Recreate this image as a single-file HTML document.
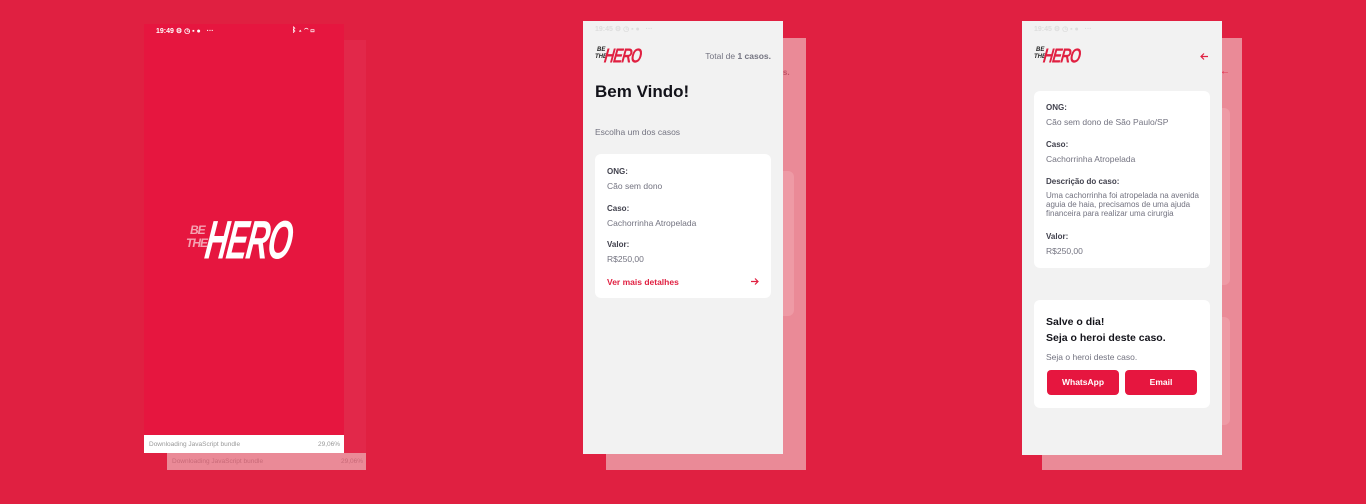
<!DOCTYPE html><html><head><meta charset="utf-8"><style>
*{margin:0;padding:0;box-sizing:border-box}
body{width:1366px;height:504px;background:#E02041;position:relative;overflow:hidden;font-family:"Liberation Sans",sans-serif}
.a{position:absolute}
.sh{background:#EA8A97}
.ph{background:#F2F2F2}
.card{background:#fff;border-radius:6px;position:absolute}
.lb{position:absolute;font-size:8px;font-weight:bold;color:#41414D}
.vl{position:absolute;font-size:8.5px;color:#737380}
.logo{position:absolute}
.logo .be{position:absolute;font-weight:bold;font-style:italic;line-height:1}
.logo .hero{position:absolute;font-weight:900;font-style:italic;line-height:1;transform:skewX(-8deg) scaleY(1.45);transform-origin:left top;letter-spacing:-1px}
.st{position:absolute;font-size:7px;font-weight:bold;color:#fff}
</style></head><body>
<!-- splash -->
<div class="a" style="left:167px;top:40px;width:199px;height:430px;background:#E2284A"></div>
<div class="a" style="left:167px;top:453px;width:199px;height:17px;background:#EA8A97"></div>
<div class="a" style="left:172px;top:458px;font-size:6.5px;color:#c86a78">Downloading JavaScript bundle</div>
<div class="a" style="left:341px;top:458px;font-size:6.5px;color:#c86a78">29,06%</div>
<div class="a" style="left:144px;top:24px;width:200px;height:411px;background:#E6163F"></div>
<div class="st" style="left:156px;top:27px">19:49 ⚙ ◷ ▪ ●&nbsp;&nbsp; ···</div>
<div class="st" style="left:292px;top:27px">ᛒ ▴ ◠ ▭</div>
<div class="a" style="left:144px;top:435px;width:200px;height:18px;background:#fff"></div>
<div class="a" style="left:149px;top:441px;font-size:6.5px;color:#999">Downloading JavaScript bundle</div>
<div class="a" style="left:318px;top:441px;font-size:6.5px;color:#999">29,06%</div>
<div class="logo" style="left:186px;top:214px">
<div class="be" style="left:4px;top:10px;font-size:12px;color:#F4A3B2;letter-spacing:-1px">BE</div>
<div class="be" style="left:0px;top:23px;font-size:12px;color:#F4A3B2;letter-spacing:-1px">THE</div>
<div class="hero" style="left:24px;top:-1px;font-size:31px;color:#fff;transform:skewX(-8deg) scaleY(1.75)">HERO</div>
</div>
<!-- middle -->
<div class="a sh" style="left:606px;top:38px;width:200px;height:432px"></div>
<div class="a" style="left:778px;top:68px;font-size:8px;color:#c05466;font-weight:bold">os.</div>
<div class="a" style="left:618px;top:171px;width:176px;height:145px;background:#EE9AA5;border-radius:6px"></div>
<div class="a ph" style="left:583px;top:21px;width:200px;height:433px"></div>
<div class="a" style="left:595px;top:25px;font-size:7px;color:#ddd;font-weight:bold">19:45 ⚙ ◷ ▪ ●&nbsp;&nbsp; ···</div>
<div class="logo" style="left:595px;top:45px">
<div class="be" style="left:2px;top:2px;font-size:6px;color:#222">BE</div>
<div class="be" style="left:0;top:9px;font-size:6px;color:#222">THE</div>
<div class="hero" style="left:11px;top:0;font-size:14px;color:#E02041">HERO</div>
</div>
<div class="a" style="right:595px;top:51px;font-size:8.5px;color:#737380">Total de <b>1 casos.</b></div>
<div class="a" style="left:595px;top:82px;font-size:17px;font-weight:bold;color:#13131A">Bem Vindo!</div>
<div class="a" style="left:595px;top:127px;font-size:8.5px;color:#737380">Escolha um dos casos</div>
<div class="card" style="left:595px;top:154px;width:176px;height:144px"></div>
<div class="lb" style="left:607px;top:167px">ONG:</div>
<div class="vl" style="left:607px;top:181px">Cão sem dono</div>
<div class="lb" style="left:607px;top:204px">Caso:</div>
<div class="vl" style="left:607px;top:218px">Cachorrinha Atropelada</div>
<div class="lb" style="left:607px;top:240px">Valor:</div>
<div class="vl" style="left:607px;top:254px">R$250,00</div>
<div class="a" style="left:607px;top:277px;font-size:8.5px;font-weight:bold;color:#E02041">Ver mais detalhes</div>
<svg class="a" style="left:750px;top:277px" width="9" height="9" viewBox="0 0 9 9"><path d="M1 4.5H8M5 1.5L8 4.5L5 7.5" stroke="#E02041" stroke-width="1.2" fill="none"/></svg>
<!-- right -->
<div class="a sh" style="left:1042px;top:38px;width:200px;height:432px"></div>
<div class="a" style="left:1220px;top:66px;font-size:10px;color:#E02041">←</div>
<div class="a" style="left:1054px;top:108px;width:176px;height:177px;background:#EE9AA5;border-radius:6px"></div>
<div class="a" style="left:1054px;top:317px;width:176px;height:108px;background:#EE9AA5;border-radius:6px"></div>
<div class="a ph" style="left:1022px;top:21px;width:200px;height:434px"></div>
<div class="a" style="left:1034px;top:25px;font-size:7px;color:#ddd;font-weight:bold">19:45 ⚙ ◷ ▪ ●&nbsp;&nbsp; ···</div>
<div class="logo" style="left:1034px;top:45px">
<div class="be" style="left:2px;top:2px;font-size:6px;color:#222">BE</div>
<div class="be" style="left:0;top:9px;font-size:6px;color:#222">THE</div>
<div class="hero" style="left:11px;top:0;font-size:14px;color:#E02041">HERO</div>
</div>
<svg class="a" style="left:1200px;top:52px" width="9" height="9" viewBox="0 0 9 9"><path d="M8 4.5H1M4 1.5L1 4.5L4 7.5" stroke="#E02041" stroke-width="1.2" fill="none"/></svg>
<div class="card" style="left:1034px;top:91px;width:176px;height:177px"></div>
<div class="lb" style="left:1046px;top:103px">ONG:</div>
<div class="vl" style="left:1046px;top:117px">Cão sem dono de São Paulo/SP</div>
<div class="lb" style="left:1046px;top:140px">Caso:</div>
<div class="vl" style="left:1046px;top:154px">Cachorrinha Atropelada</div>
<div class="lb" style="left:1046px;top:177px">Descrição do caso:</div>
<div class="vl" style="left:1046px;top:191px;width:158px;line-height:9px;font-size:8px">Uma cachorrinha foi atropelada na avenida aguia de haia, precisamos de uma ajuda financeira para realizar uma cirurgia</div>
<div class="lb" style="left:1046px;top:232px">Valor:</div>
<div class="vl" style="left:1046px;top:246px">R$250,00</div>
<div class="card" style="left:1034px;top:300px;width:176px;height:108px"></div>
<div class="a" style="left:1046px;top:314px;font-size:10.5px;font-weight:bold;color:#13131A;line-height:16px">Salve o dia!<br>Seja o heroi deste caso.</div>
<div class="vl" style="left:1046px;top:352px">Seja o heroi deste caso.</div>
<div class="a" style="left:1047px;top:370px;width:72px;height:25px;background:#E6163F;border-radius:4px;color:#fff;font-size:8.5px;font-weight:bold;text-align:center;line-height:25px">WhatsApp</div>
<div class="a" style="left:1125px;top:370px;width:72px;height:25px;background:#E6163F;border-radius:4px;color:#fff;font-size:8.5px;font-weight:bold;text-align:center;line-height:25px">Email</div>
</body></html>
